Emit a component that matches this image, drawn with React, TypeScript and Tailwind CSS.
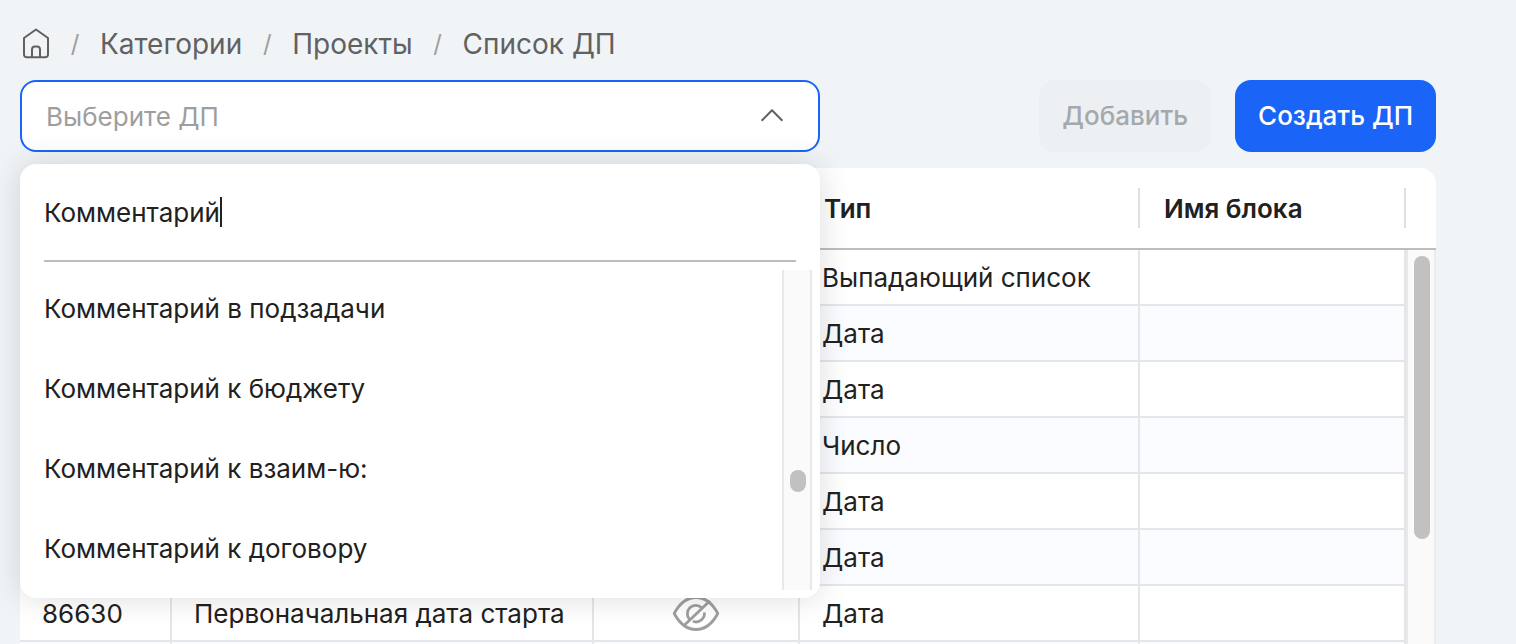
import { Fragment } from "react";

const crumbs = ["Категории", "Проекты", "Список ДП"];

const options = [
  "Комментарий в подзадачи",
  "Комментарий к бюджету",
  "Комментарий к взаим-ю:",
  "Комментарий к договору",
];

type Row = { id?: string; name?: string; hidden?: boolean; type?: string };

const rows: Row[] = [
  { type: "Выпадающий список" },
  { type: "Дата" },
  { type: "Дата" },
  { type: "Число" },
  { type: "Дата" },
  { type: "Дата" },
  { id: "86630", name: "Первоначальная дата старта", hidden: true, type: "Дата" },
  {},
];

function HomeIcon() {
  return (
    <svg className="h-8 w-7" viewBox="0 0 28 32" fill="none" stroke="#616161" strokeWidth="2" strokeLinejoin="round">
      <path d="M2 10 14 1.500 26 10v16.800a2.500 2.500 0 0 1-2.500 2.500h-19A2.500 2.500 0 0 1 2 26.800Z" />
      <path d="M10 29.300V21.500a3 3 0 0 1 3-3h2a3 3 0 0 1 3 3v7.800" />
    </svg>
  );
}

function HiddenEyeIcon() {
  return (
    <svg className="mx-auto h-9 w-12" viewBox="0 1 48 36" fill="none" stroke="#9e9e9e" strokeWidth="2.800">
      <path d="M2.200 18.500C7 9.500 14.500 2.500 24 2.500s17 7 21.800 16C41 27.500 33.500 34.500 24 34.500S7 27.500 2.200 18.500Z" strokeLinejoin="round" />
      <path d="M17.500 24.500A8.500 8.500 0 0 1 29.500 12.500" />
      <path d="M32.400 17.500A8.500 8.500 0 0 1 20.800 26.300" />
      <path d="M11.500 31 38 5.800" />
    </svg>
  );
}

function HeaderCell({ children }: { children?: string }) {
  return (
    <th className="h-20 border-b-2 border-[#bdbdbd] p-0 text-left font-semibold">
      <div className="flex h-10 items-center border-r-2 border-[#dde1e5] px-6 pt-0.5">{children}</div>
    </th>
  );
}

export default function App() {
  const cell = "h-14 truncate border-r-2 border-b-2 border-[#e4e6e8] pt-0.5 pb-0 px-[22px]";
  return (
    <main className="h-screen overflow-hidden bg-[#f0f4f7] pr-20 pl-5 font-['Inter','Liberation_Sans',sans-serif] text-[26px] leading-8 text-[#212121]">
      <nav aria-label="Навигация" className="flex h-20 items-center gap-5 pt-2 text-[28px] text-[#616161]">
        <a href="#home" aria-label="Главная" className="ml-0.5">
          <HomeIcon />
        </a>
        {crumbs.map((c) => (
          <Fragment key={c}>
            <span aria-hidden="true" className="w-2.5 text-center text-[24px] text-[#9e9e9e]">/</span>
            <a href="#crumb">{c}</a>
          </Fragment>
        ))}
      </nav>

      <div className="flex gap-6">
        <div className="relative max-w-[800px] flex-1">
          <select
            aria-label="Выберите ДП"
            className="h-[72px] w-full appearance-none rounded-2xl border-2 border-[#1a65f8] bg-white px-6 pt-0.5 text-[#9e9e9e] outline-none"
          >
            <option>Выберите ДП</option>
          </select>
          <svg className="pointer-events-none absolute top-6 right-9 size-6" viewBox="0 0 24 24" fill="none" stroke="#616161" strokeWidth="2">
            <path d="M1.600 16.700 12 6.300l10.400 10.400" strokeLinejoin="round" />
          </svg>

          <div className="absolute top-full z-10 mt-3 w-full rounded-2xl bg-white pb-2 shadow-[0_0_32px_rgba(0,0,0,0.14)]">
            <div className="mx-6 flex h-[98px] items-center border-b-2 border-[#bdbdbd]">
              <input
                aria-label="Поиск"
                defaultValue="Комментарий"
                className="field-sizing-content pt-0.5 outline-none"
              />
              <span className="h-[30px] w-0.5 bg-[#212121]" />
            </div>
            <div className="mt-2 mr-2 flex">
              <ul role="listbox" aria-label="Варианты" className="flex-1">
                {options.map((o) => (
                  <li key={o} role="option" aria-selected="false" className="flex h-20 items-center px-6 pb-0.5">
                    {o}
                  </li>
                ))}
              </ul>
              <div className="w-[30px] border-x-2 border-[#e8e8e8] bg-[#fafafa] px-[6px] pt-[200px]">
                <div className="h-[22px] w-4 rounded-full bg-[#c1c1c1]" />
              </div>
            </div>
          </div>
        </div>
        <button disabled className="ml-auto h-[72px] rounded-2xl bg-[#ecf0f3] px-[23px] font-medium text-[#a6a9ab]">
          Добавить
        </button>
        <button className="h-[72px] rounded-2xl bg-[#1a65f8] px-[23px] font-medium text-white">Создать ДП</button>
      </div>

      <div className="relative mt-4 overflow-hidden rounded-t-2xl bg-white">
        <table className="w-full table-fixed border-separate border-spacing-0">
          <colgroup>
            <col className="w-[152px]" />
            <col />
            <col className="w-[206px]" />
            <col className="w-[340px]" />
            <col className="w-[266px]" />
            <col className="w-[30px]" />
          </colgroup>
          <thead>
            <tr>
              <HeaderCell />
              <HeaderCell />
              <HeaderCell />
              <HeaderCell>Тип</HeaderCell>
              <HeaderCell>Имя блока</HeaderCell>
              <th className="h-[82px] border-b-2 border-[#bdbdbd] p-0" />
            </tr>
          </thead>
          <tbody>
            {rows.map((r, i) => (
              <tr key={i} className="even:bg-[#fbfcff]">
                <td className={cell}>{r.id}</td>
                <td className={cell}>{r.name}</td>
                <td className={cell}>{r.hidden && <HiddenEyeIcon />}</td>
                <td className={cell}>{r.type}</td>
                <td className={cell} />
                <td />
              </tr>
            ))}
          </tbody>
        </table>
        <div className="absolute top-[82px] right-0 bottom-0 w-[30px] border-x-2 border-r-[#ededed] border-l-[#e8e8e8] bg-[#fafafa] px-[6px] pt-[6px]">
          <div className="h-[283px] w-4 rounded-full bg-[#c1c1c1]" />
        </div>
      </div>
    </main>
  );
}
